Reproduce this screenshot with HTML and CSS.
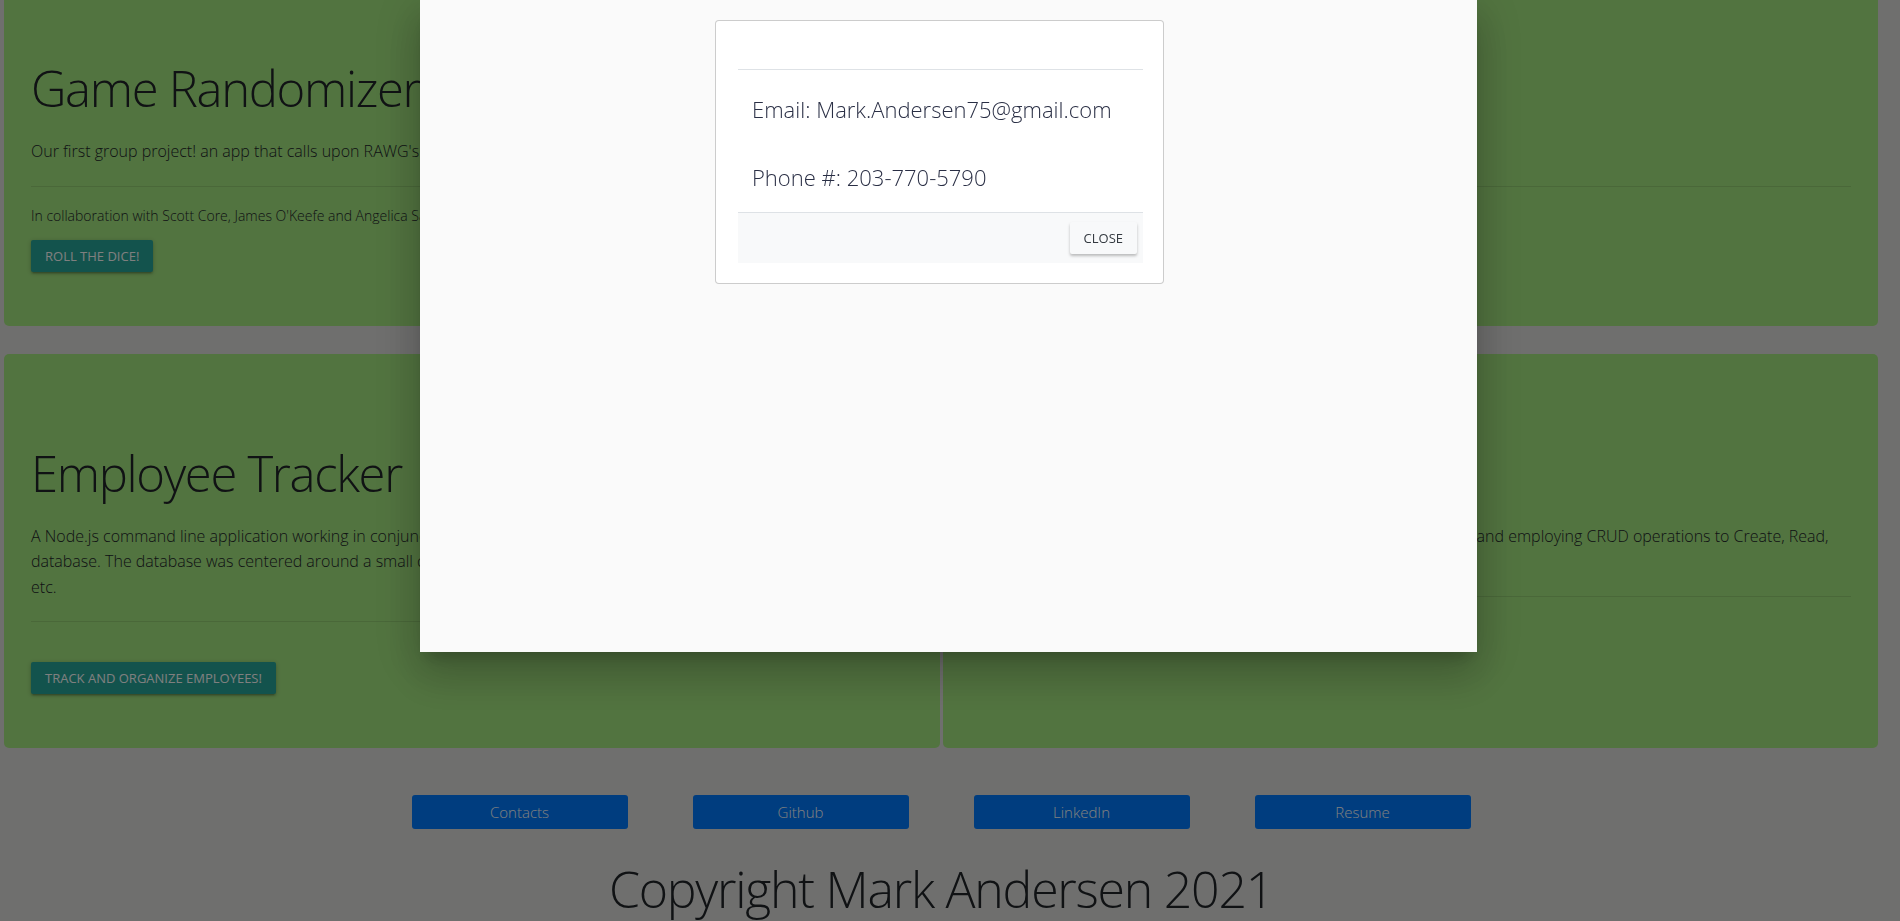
FILE: index.html
```html
<!DOCTYPE html>
<html lang="en">
<head>
<meta charset="utf-8">
<title>Mark Andersen - Portfolio</title>
<link rel="stylesheet" href="styles.css">
</head>
<body>
<div class="page">
  <section class="card-row">
    <article class="card">
      <h1 class="card-title">Game Randomizer</h1>
      <p class="card-lead">Our first group project! an app that calls upon RAWG's video game database to suggest a random game to play.</p>
      <hr class="card-rule">
      <p class="card-note">In collaboration with Scott Core, James O'Keefe and Angelica Sargent</p>
      <div class="card-actions"><a class="btn-teal" href="#">Roll the dice!</a></div>
    </article>
    <article class="card">
      <h1 class="card-title">Weather Dashboard</h1>
      <p class="card-lead">A weather app built on the OpenWeather API.</p>
      <hr class="card-rule">
      <p class="card-note">Built with HTML, CSS and jQuery</p>
      <div class="card-actions"><a class="btn-teal" href="#">Check the weather!</a></div>
    </article>
  </section>

  <section class="card-row">
    <article class="card">
      <h1 class="card-title">Employee Tracker</h1>
      <p class="card-lead">A Node.js command line application working in conjunction with Inquirer and MySQL to build and manage a relational database. The database was centered around a small company's employees, roles, departments, salaries, managers,<br>etc.</p>
      <hr class="card-rule">
      <div class="card-actions spaced"><a class="btn-teal" href="#">Track and organize employees!</a></div>
    </article>
    <article class="card">
      <h1 class="card-title">Note Taker</h1>
      <p class="card-lead">An Express.js note taking app that reads and writes data to a JSON file, and employing CRUD operations to Create, Read, Update and Delete notes.</p>
      <hr class="card-rule">
    </article>
  </section>

  <footer class="site-footer">
    <nav class="footer-links">
      <a class="footer-link" href="#">Contacts</a>
      <a class="footer-link" href="#">Github</a>
      <a class="footer-link" href="#">LinkedIn</a>
      <a class="footer-link" href="#">Resume</a>
    </nav>
    <p class="copyright">Copyright Mark Andersen 2021</p>
  </footer>
</div>

<div class="modal-overlay"></div>
<div class="modal">
  <div class="contact-card">
    <div class="contact-header"></div>
    <div class="contact-body">
      <p>Email: Mark.Andersen75@gmail.com</p>
      <p>Phone #: 203-770-5790</p>
    </div>
    <div class="contact-footer">
      <button class="btn-close" type="button">Close</button>
    </div>
  </div>
</div>
</body>
</html>
```
FILE: styles.css
```css
html, body {
  margin: 0;
  height: 100%;
  overflow: hidden;
}

body {
  background: #dfdfdd;
  font-family: "Open Sans", "Liberation Sans", sans-serif;
  font-weight: 300;
  color: #212529;
}

.page {
  margin-top: -31px;
  padding: 0 22px 0 4px;
}

.card-row {
  display: flex;
  gap: 3px;
}

.card-row + .card-row {
  margin-top: 28px;
}

.card {
  flex: 1;
  min-width: 0;
  background: #a5e881;
  border-radius: 5px;
  padding: 90px 27px 54px;
}

.card-title {
  margin: 0;
  font-size: 49px;
  line-height: 58px;
  font-weight: 300;
  letter-spacing: -0.027em;
}

.card-lead {
  margin: 22px 0 0;
  font-size: 16px;
  line-height: 25.5px;
}

.card-rule {
  margin: 21px 0 0;
  height: 0;
  border: 0;
  border-top: 1px solid rgba(0, 0, 0, 0.1);
}

.card-note {
  margin: 19px 0 14px;
  font-size: 14px;
  line-height: 20px;
}

.card-actions {
  display: flex;
}

.card-actions.spaced {
  margin-top: 40px;
}

.btn-teal {
  height: 32px;
  line-height: 32px;
  padding: 0 14px;
  background: #26a69a;
  color: #fff;
  font-size: 13px;
  font-weight: 400;
  text-transform: uppercase;
  text-decoration: none;
  border-radius: 2px;
  box-shadow: 0 2px 2px 0 rgba(0, 0, 0, 0.14), 0 3px 1px -2px rgba(0, 0, 0, 0.12), 0 1px 5px 0 rgba(0, 0, 0, 0.2);
}

.site-footer {
  margin-top: 47px;
  display: flex;
  flex-direction: column;
  align-items: center;
}

.footer-links {
  display: flex;
  gap: 65px;
}

.footer-link {
  width: 216px;
  height: 34px;
  display: flex;
  align-items: center;
  justify-content: center;
  background: #007bff;
  color: #fff;
  border-radius: 3px;
  font-size: 15px;
  text-decoration: none;
}

.copyright {
  margin: 30px 0 0;
  font-size: 50px;
  line-height: 60px;
  font-weight: 300;
  letter-spacing: -0.025em;
}

.modal-overlay {
  position: fixed;
  inset: 0;
  background: rgba(0, 0, 0, 0.5);
}

.modal {
  position: fixed;
  top: 0;
  left: 420px;
  width: 1057px;
  height: 652px;
  background: #fafafa;
  box-shadow: 0 24px 38px 3px rgba(0, 0, 0, 0.14), 0 9px 46px 8px rgba(0, 0, 0, 0.12), 0 11px 15px -7px rgba(0, 0, 0, 0.2);
}

.contact-card {
  box-sizing: border-box;
  width: 449px;
  margin: 20px 0 0 295px;
  padding: 16px 20px 20px 22px;
  background: #fff;
  border: 1px solid rgba(0, 0, 0, 0.2);
  border-radius: 4px;
}

.contact-header {
  height: 32px;
  border-bottom: 1px solid #dee2e6;
}

.contact-body {
  padding: 22px 14px 18px;
  color: #2a2f45;
}

.contact-body p {
  margin: 0;
  font-size: 22px;
  line-height: 34px;
}

.contact-body p + p {
  margin-top: 34px;
}

.contact-footer {
  display: flex;
  justify-content: flex-end;
  padding: 9px 6px;
  border-top: 1px solid #dee2e6;
  background: #f8f9fa;
}

.btn-close {
  height: 32px;
  padding: 0 14px;
  border: 0;
  border-radius: 2px;
  background: #f8f9fa;
  color: #343a40;
  font-family: inherit;
  font-size: 13px;
  font-weight: 400;
  text-transform: uppercase;
  box-shadow: 0 2px 3px rgba(0, 0, 0, 0.25);
}
```
